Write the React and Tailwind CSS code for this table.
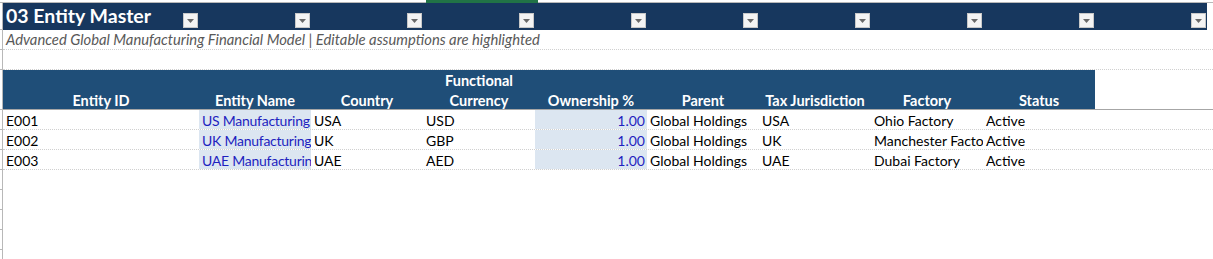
import React from 'react';

const WIDTHS = ['w-[196px]', 'w-[112px]', 'w-[112px]', 'w-[112px]', 'w-[112px]', 'w-[112px]', 'w-[112px]', 'w-[112px]', 'w-[112px]', 'w-[112px]'];

const HEADERS = ['Entity ID', 'Entity Name', 'Country', ['Functional', 'Currency'], 'Ownership %', 'Parent', 'Tax Jurisdiction', 'Factory', 'Status'];

const ROWS = [
  ['E001', 'US Manufacturing', 'USA', 'USD', '1.00', 'Global Holdings', 'USA', 'Ohio Factory', 'Active'],
  ['E002', 'UK Manufacturing', 'UK', 'GBP', '1.00', 'Global Holdings', 'UK', 'Manchester Factory', 'Active'],
  ['E003', 'UAE Manufacturing', 'UAE', 'AED', '1.00', 'Global Holdings', 'UAE', 'Dubai Factory', 'Active'],
];

// editable (input) columns get the pale blue fill
const INPUT_COLS = [1, 4];

function FilterButton() {
  return (
    <div className="w-[15px] h-[15px] bg-[#f4f4f4] border border-[#c8c8c8] flex items-center justify-center">
      <svg width="7" height="4" viewBox="0 0 7 4" className="mt-[1px]">
        <path d="M0 0h7L3.5 4z" fill="#6a6a6a" />
      </svg>
    </div>
  );
}

function Gutter() {
  return <div className="w-[3px] shrink-0 h-full border-r border-b border-[#b8b8b8]" />;
}

function Row({ className = '', lineClass = 'border-b border-dotted border-[#d0d0d0]', children }) {
  return (
    <div className={`flex ${className}`}>
      <Gutter />
      <div className={`flex w-[1210px] ${lineClass}`}>{children}</div>
    </div>
  );
}

export default function App() {
  return (
    <div className="w-[1213px] h-[259px] bg-white overflow-hidden text-black font-['Lato',sans-serif]">
      {/* column header edge with selected column marker */}
      <div className="flex h-[3px]">
        <div className="w-[426px] border-b border-[#b8b8b8]" />
        <div className="w-[112px] bg-[#217346]" />
        <div className="flex-1 border-b border-[#b8b8b8]" />
      </div>

      {/* title band */}
      <Row className="h-[27px]" lineClass="">
        <div className="flex w-[1204px] bg-[#17375e]">
          {WIDTHS.map((w, i) => (
            <div key={i} className={`${w} relative flex items-end justify-end pr-[1px] pb-[2px]`}>
              {i === 0 && (
                <span className="absolute left-[3px] top-[1px] text-white font-bold text-[19.5px] leading-[24px] whitespace-nowrap">
                  03 Entity Master
                </span>
              )}
              <FilterButton />
            </div>
          ))}
        </div>
      </Row>

      {/* subtitle */}
      <Row className="h-[20px]">
        <div className="w-[1204px] pl-[3px] text-[14.8px] leading-[19px] italic text-[#595959] whitespace-nowrap">
          Advanced Global Manufacturing Financial Model | Editable assumptions are highlighted
        </div>
      </Row>

      <Row className="h-[20px]">
        <div className="w-[1204px]" />
      </Row>

      {/* table header */}
      <Row className="h-[40px]" lineClass="border-b border-[#a6a6a6]">
        <div className="flex bg-[#1f4e78]">
          {HEADERS.map((h, i) => (
            <div key={i} className={`${WIDTHS[i]} flex flex-col items-center justify-end translate-y-[2px] text-white font-bold text-[14.5px] leading-[20px]`}>
              {Array.isArray(h) ? h.map((l) => <span key={l}>{l}</span>) : <span>{h}</span>}
            </div>
          ))}
        </div>
      </Row>

      {/* data */}
      {ROWS.map((r) => (
        <Row key={r[0]} className="h-[20px]">
          {r.map((v, i) => {
            const input = INPUT_COLS.includes(i);
            const numeric = i === 4;
            return (
              <div
                key={i}
                className={`${WIDTHS[i]} overflow-hidden whitespace-nowrap text-[14px] leading-[19px] pt-[1px] ${
                  input ? 'bg-[#dce6f1] text-[#1f1fbf]' : ''
                } ${i === 1 ? 'tracking-[-0.25px]' : ''} ${numeric ? 'text-right pr-[2px]' : 'pl-[3px]'}`}
              >
                {v}
              </div>
            );
          })}
        </Row>
      ))}

      {/* empty sheet rows */}
      {[0, 1, 2, 3, 4].map((k) => (
        <Row key={k} className="h-[20px]" lineClass="">
          <div />
        </Row>
      ))}
    </div>
  );
}
